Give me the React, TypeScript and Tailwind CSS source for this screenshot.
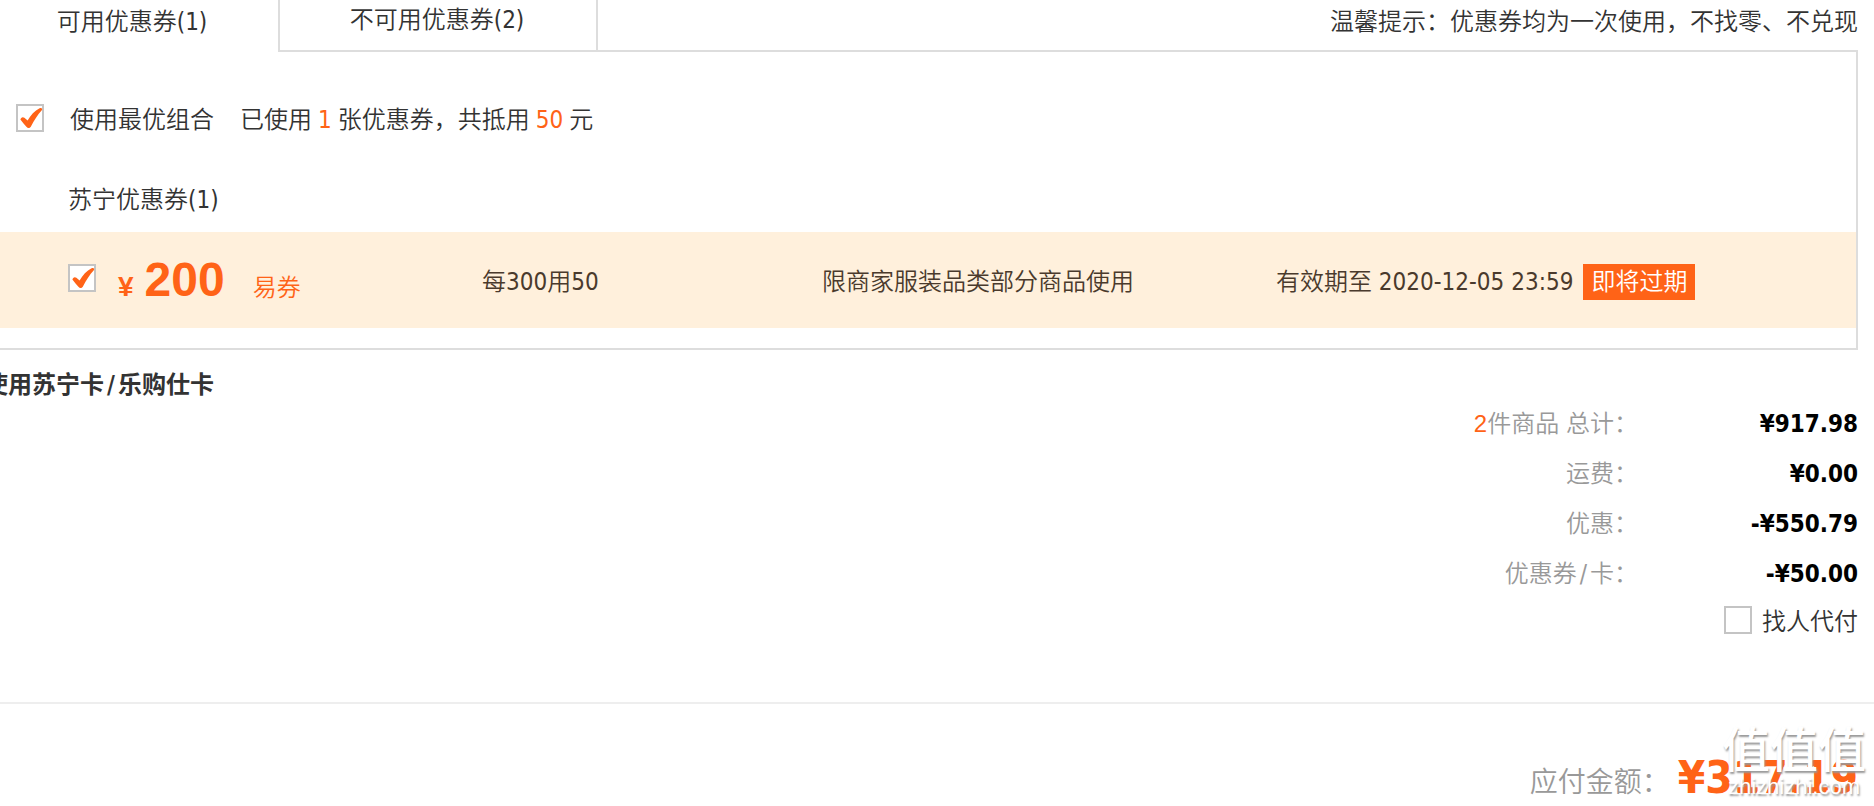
import { useState } from "react";

const LATIN = "font-['DejaVu_Sans_Condensed','Noto_Sans_CJK_SC',sans-serif]";

function CheckBox({ id, label, defaultChecked = false }: { id: string; label?: string; defaultChecked?: boolean }) {
  const [checked, setChecked] = useState(defaultChecked);
  return (
    <span className="relative block size-7 shrink-0">
      <input
        id={id}
        type="checkbox"
        aria-label={label}
        checked={checked}
        onChange={(e) => setChecked(e.target.checked)}
        className="block size-7 appearance-none border-2 border-[#c4c4c4] bg-white"
      />
      {checked && (
        <svg viewBox="0 0 28 28" className="pointer-events-none absolute inset-0 size-7" aria-hidden="true">
          <path
            d="M4.4 15.6 C4.8 13.4 6.8 12.4 8.4 13.8 L11.6 16.6 C14.6 11 18.6 6.6 23.6 4.2 C25.4 3.4 27 4.4 25.8 6.2 C21.6 10.8 18.2 16.4 15.2 22 C14 24.4 12 24.8 10.4 22.8 C8.4 20.4 6.2 18.2 4.4 15.6 Z"
            fill="#ff6317"
          />
        </svg>
      )}
    </span>
  );
}

const totals = [
  { count: "2", label: "件商品 总计：", amount: "¥917.98" },
  { label: "运费：", amount: "¥0.00" },
  { label: "优惠：", amount: "-¥550.79" },
  { label: "优惠券/卡：", amount: "-¥50.00" },
];

function Slashed({ text }: { text: string }) {
  const [before, after] = text.split("/");
  if (after === undefined) return <>{text}</>;
  return (
    <>
      {before}
      <span className="px-[3px]">/</span>
      {after}
    </>
  );
}

export default function App() {
  return (
    <div lang="zh-CN" className={`${LATIN} relative overflow-hidden bg-white text-2xl font-[350] text-[#333]`}>
      <section className="pr-4">
        <div className="flex h-[50px] items-start">
          <button className="w-[278px] pt-1.5 pr-[14px] text-center">可用优惠券(1)</button>
          <button className="h-[50px] w-[320px] border-x-2 border-[#ddd] pr-0.5 pb-2.5 text-center">不可用优惠券(2)</button>
          <p className="ml-auto pt-1.5">温馨提示：优惠券均为一次使用，不找零、不兑现</p>
        </div>

        <div className="flex">
          <div className="w-[278px]" />
          <div className="h-[2px] flex-1 bg-[#ddd]" />
        </div>

        <div className="border-r-2 border-b-2 border-[#ddd] pb-5">
          <div className="flex items-center pt-12 pl-4">
            <CheckBox id="best" defaultChecked />
            <label htmlFor="best" className="pt-1 pl-[26px]">使用最优组合</label>
            <p className="pt-1 pl-[26px]">
              已使用<span className="px-1.5 text-[#ff6317]">1</span>张优惠券，共抵用
              <span className="px-1.5 text-[#ff6317]">50</span>元
            </p>
          </div>
          <h2 className="pt-12 pb-4 pl-[68px]">苏宁优惠券(1)</h2>
          <div className="grid h-24 grid-cols-[482fr_340fr_454fr_580fr] items-center bg-[#fff0dc] pt-1 text-[#4a3a2c]">
            <div className="flex items-center pl-[68px] text-[#ff6317]">
              <div className="mb-2">
                <CheckBox id="coupon" label="易券 200" defaultChecked />
              </div>
              <div className="mb-0.5 flex items-baseline pl-[22px]">
                <span className="font-['Liberation_Sans'] text-[28px] font-bold">¥</span>
                <span className="pl-[11px] font-['Liberation_Sans'] text-5xl font-bold">200</span>
                <span className="pl-7">易券</span>
              </div>
            </div>
            <p>每300用50</p>
            <p>限商家服装品类部分商品使用</p>
            <p className="flex items-center gap-2.5">
              有效期至 2020-12-05 23:59
              <span className="bg-[#ff6317] px-2 py-0.5 text-white">即将过期</span>
            </p>
          </div>
        </div>
      </section>

      <section className="pr-4">
        <h2 className="-ml-4 pt-[21px] leading-7 font-bold">
          <Slashed text="使用苏宁卡/乐购仕卡" />
        </h2>
        <dl>
          {totals.map((row) => (
            <div key={row.label} className="flex h-[50px] items-center justify-end">
              <dt className="text-[#999]">
                {row.count && <span className="font-['Liberation_Sans'] text-[#ff6317]">{row.count}</span>}
                <Slashed text={row.label} />
              </dt>
              <dd className="w-[220px] text-right font-bold text-black">{row.amount}</dd>
            </div>
          ))}
        </dl>
        <div className="flex items-center justify-end gap-2.5 pt-[5px]">
          <CheckBox id="friend" />
          <label htmlFor="friend" className="pt-1 leading-7">找人代付</label>
        </div>
      </section>

      <footer className="mt-[66px] flex items-center justify-end border-t-2 border-[#eee] pt-12 pr-4">
        <span className="pt-2.5 text-[28px] text-[#999]">应付金额：</span>
        <strong className="pl-2 text-[44px] leading-[52px] font-bold text-[#ff6317]">¥317.19</strong>
      </footer>

      <div className="pointer-events-none absolute right-2 bottom-1 flex flex-col items-center text-white [text-shadow:1px_2px_2px_#999]">
        <span className="text-[48px] leading-[48px] font-medium">值值值</span>
        <span className="font-['Liberation_Sans'] text-[22px] leading-[26px]">zhizhizhi.com</span>
      </div>
    </div>
  );
}
